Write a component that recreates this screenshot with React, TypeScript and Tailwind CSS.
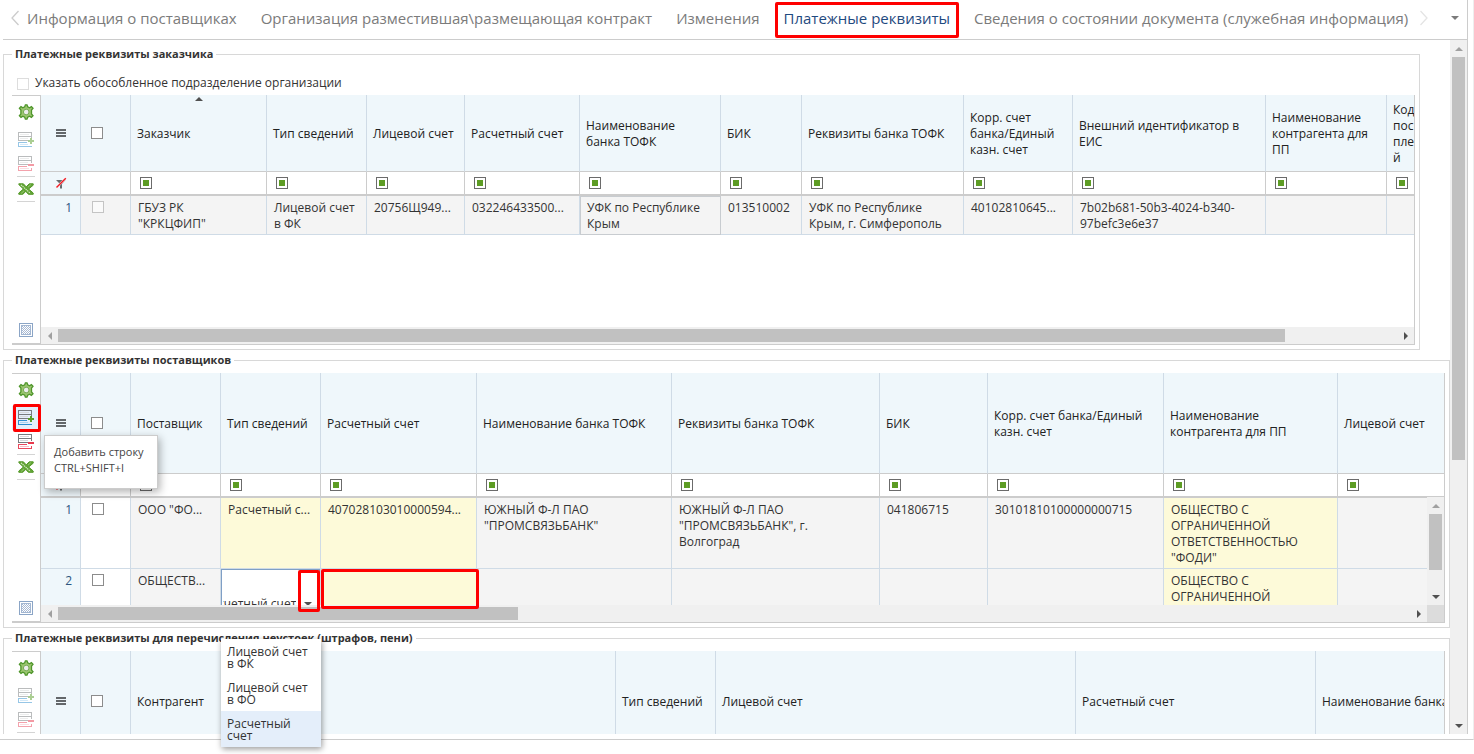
import clsx from 'clsx';

type Cell = { text?: string; yellow?: boolean; focused?: boolean; editor?: boolean };
type Column = { title: string; width: number; sorted?: boolean };

const tabs = [
  'Информация о поставщиках',
  'Организация разместившая\\размещающая контракт',
  'Изменения',
  'Платежные реквизиты',
  'Сведения о состоянии документа (служебная информация)',
];

const activeTab = 3;

const customerColumns: Column[] = [
  { title: 'Заказчик', width: 136, sorted: true },
  { title: 'Тип сведений', width: 100 },
  { title: 'Лицевой счет', width: 98 },
  { title: 'Расчетный счет', width: 115 },
  { title: 'Наименование\nбанка ТОФК', width: 141 },
  { title: 'БИК', width: 81 },
  { title: 'Реквизиты банка ТОФК', width: 162 },
  { title: 'Корр. счет\nбанка/Единый\nказн. счет', width: 109 },
  { title: 'Внешний идентификатор в\nЕИС', width: 193 },
  { title: 'Наименование\nконтрагента для\nПП', width: 121 },
  { title: 'Код\nпос\nпле\nй', width: 60 },
];

const customerRows: Cell[][] = [
  [
    { text: 'ГБУЗ РК\n"КРКЦФИП"' },
    { text: 'Лицевой счет\nв ФК' },
    { text: '20756Щ949...' },
    { text: '032246433500...' },
    { text: 'УФК по Республике\nКрым', focused: true },
    { text: '013510002' },
    { text: 'УФК по Республике\nКрым, г. Симферополь' },
    { text: '40102810645...' },
    { text: '7b02b681-50b3-4024-b340-\n97befc3e6e37' },
    {},
    {},
  ],
];

const supplierColumns: Column[] = [
  { title: 'Поставщик', width: 90 },
  { title: 'Тип сведений', width: 100 },
  { title: 'Расчетный счет', width: 156 },
  { title: 'Наименование банка ТОФК', width: 195 },
  { title: 'Реквизиты банка ТОФК', width: 208 },
  { title: 'БИК', width: 108 },
  { title: 'Корр. счет банка/Единый\nказн. счет', width: 176 },
  { title: 'Наименование\nконтрагента для ПП', width: 174 },
  { title: 'Лицевой счет', width: 180 },
];

const supplierRows: Cell[][] = [
  [
    { text: 'ООО "ФО...' },
    { text: 'Расчетный с...', yellow: true },
    { text: '407028103010000594...', yellow: true },
    { text: 'ЮЖНЫЙ Ф-Л ПАО\n"ПРОМСВЯЗЬБАНК"' },
    { text: 'ЮЖНЫЙ Ф-Л ПАО\n"ПРОМСВЯЗЬБАНК", г.\nВолгоград' },
    { text: '041806715' },
    { text: '30101810100000000715' },
    { text: 'ОБЩЕСТВО С\nОГРАНИЧЕННОЙ\nОТВЕТСТВЕННОСТЬЮ\n"ФОДИ"', yellow: true },
    {},
  ],
  [
    { text: 'ОБЩЕСТВ...' },
    { editor: true },
    { yellow: true },
    {},
    {},
    {},
    {},
    { text: 'ОБЩЕСТВО С\nОГРАНИЧЕННОЙ', yellow: true },
    {},
  ],
];

const penaltyColumns: Column[] = [
  { title: 'Контрагент', width: 485 },
  { title: 'Тип сведений', width: 100 },
  { title: 'Лицевой счет', width: 360 },
  { title: 'Расчетный счет', width: 240 },
  { title: 'Наименование банка', width: 200 },
];

const accountTypes = ['Лицевой счет\nв ФК', 'Лицевой счет\nв ФО', 'Расчетный\nсчет'];

function GearIcon() {
  return (
    <svg width="16" height="16" viewBox="0 0 16 16">
      <path
        d="M6.7 2.8 L7.4 .8 H9 L9.7 2.8 L11.6 3.8 L13.4 2.6 L15 4.2 L13.5 6 V10 L15 11.8 L13.4 13.4 L11.6 12.2 L9.7 13.2 L9 15.2 H7.4 L6.7 13.2 L4.8 12.2 L3 13.4 L1.4 11.8 L2.9 10 V6 L1.4 4.2 L3 2.6 L4.8 3.8 Z"
        fill="#9cc670"
        stroke="#4f962b"
        strokeWidth="1.3"
      />
      <circle cx="8.2" cy="8" r="2.8" fill="#ededed" stroke="#78ab58" />
    </svg>
  );
}

function AddRowIcon() {
  return (
    <svg width="16" height="16" viewBox="0 0 16 16" fill="none" shapeRendering="crispEdges">
      <path d="M.5 .5h13v8H.5zM.5 4.5h13" stroke="#777b7e" />
      <path d="M2 2.5h9M2 6.5h8" stroke="#d8dadb" />
      <path d="M9 10.5H.5v4h13v-1" stroke="#2f8fce" />
      <path d="M2 12.5h8" stroke="#a9d4f2" />
      <path d="M12 6h2v2h2v2h-2v2h-2v-2h-2V8h2z" fill="#5a9e2a" />
    </svg>
  );
}

function RemoveRowIcon() {
  return (
    <svg width="16" height="16" viewBox="0 0 16 16" fill="none" shapeRendering="crispEdges">
      <path d="M.5 8.5v-8h13v6M.5 4.5h13M.5 8.5h9" stroke="#777b7e" />
      <path d="M2 2.5h9M2 6.5h8" stroke="#d8dadb" />
      <path d="M9 10.5H.5v4h13v-3" stroke="#e8485c" />
      <path d="M2 12.5h9" stroke="#f9bcc4" />
      <path d="M10 8h6v2h-6z" fill="#e8384c" />
    </svg>
  );
}

function ExcelIcon() {
  return (
    <svg width="16" height="12" viewBox="0 0 16 12">
      <path
        d="M.8 .8h4.6l2.8 3 3-3h4v1.4L10.6 6l4.6 4v1.3h-4.8L7.8 8.4l-3 2.9h-4V10l4.6-4L.8 1.6z"
        fill="#63a536"
        stroke="#56992b"
        strokeWidth="1"
      />
      <path d="M3 1.8l9.4 8.6" stroke="#d9ecc9" strokeWidth="1.1" strokeDasharray="1.4 .7" />
      <path d="M10 4.2l2.8-2.6M3.2 10.4l2.8-2.6" stroke="#a9d088" strokeWidth=".8" />
    </svg>
  );
}

function SelectionIcon() {
  return (
    <svg width="14" height="14" viewBox="0 0 14 14" shapeRendering="crispEdges">
      <defs>
        <pattern id="dots" width="2" height="2" patternUnits="userSpaceOnUse">
          <path d="M0 0h1v1H0zM1 1h1v1H1z" fill="#a9bad3" />
        </pattern>
      </defs>
      <rect x=".5" y=".5" width="13" height="13" fill="#fff" stroke="#8ba5c6" />
      <rect x="2.5" y="2.5" width="9" height="9" fill="url(#dots)" stroke="#a3b7d2" />
    </svg>
  );
}

function ClearFilterIcon() {
  return (
    <svg width="12" height="12" viewBox="0 0 12 12">
      <path d="M1 3h9.5L7 7v4.5H5V7z" fill="#686c6f" />
      <path d="M1.5 10.5L10.8 1.2" stroke="#fff" strokeWidth="2.2" />
      <path d="M1.5 10.5L10.8 1.2" stroke="#ee1c25" strokeWidth="1.5" />
    </svg>
  );
}

function MenuIcon() {
  return (
    <svg width="10" height="8" viewBox="0 0 10 8" shapeRendering="crispEdges">
      <path d="M0 0h10v2H0zM0 3h10v2H0zM0 6h10v2H0z" fill="#63676a" />
    </svg>
  );
}

function Arrow({ dir, muted = false }: { dir: 'up' | 'down' | 'left' | 'right'; muted?: boolean }) {
  const paths = { up: 'M0 6l4-4 4 4z', down: 'M0 2l4 4 4-4z', left: 'M6 0L2 4l4 4z', right: 'M2 0l4 4-4 4z' };
  return (
    <svg width="8" height="8" viewBox="0 0 8 8">
      <path d={paths[dir]} fill={muted ? '#a0a0a0' : '#505050'} />
    </svg>
  );
}

function Checkbox({ label, faded = false }: { label: string; faded?: boolean }) {
  return (
    <input
      type="checkbox"
      aria-label={label}
      className={clsx(
        'block size-3 appearance-none border',
        faded ? 'border-[#c4c4c4] bg-[#fafafa]' : 'border-[#8c8c8c] bg-white',
      )}
    />
  );
}

function Toolbar({ enabled = false }: { enabled?: boolean }) {
  const dim = enabled ? '' : 'opacity-50';
  return (
    <div className="flex w-7 shrink-0 flex-col items-center border-t border-b-2 border-t-[#ccc] border-b-[#ccc]">
      <button type="button" aria-label="Настройки" className="flex h-8 w-7 items-center justify-center">
        <GearIcon />
      </button>
      <button
        type="button"
        aria-label="Добавить строку"
        className={clsx('flex h-6 w-7 items-center justify-center', enabled && 'bg-[#e3eefa]')}
      >
        <span className={dim}><AddRowIcon /></span>
      </button>
      <button type="button" aria-label="Удалить строку" className="flex h-6 w-7 items-center justify-center">
        <span className={dim}><RemoveRowIcon /></span>
      </button>
      <div className="h-px w-[18px] bg-[#d4d4d4]" />
      <button type="button" aria-label="Выгрузить в Excel" className="flex h-6 w-7 items-center justify-center">
        <ExcelIcon />
      </button>
      <div className="h-px w-[18px] bg-[#d4d4d4]" />
      <button type="button" aria-label="Выделение" className="mt-auto flex h-[26px] w-7 items-center justify-center">
        <SelectionIcon />
      </button>
    </div>
  );
}

function HorizontalScroll({ thumb, corner = false }: { thumb: string; corner?: boolean }) {
  return (
    <div className="flex h-[17px] bg-[#f0f0f0]">
      <div className="flex w-[17px] items-center justify-center"><Arrow dir="left" muted /></div>
      <div className="flex-1 py-[2px]">
        <div className={clsx('h-full bg-[#c1c1c1]', thumb)} />
      </div>
      <div className="flex w-[17px] items-center justify-center"><Arrow dir="right" /></div>
      {corner && <div className="w-[17px] bg-[#dcdcdc]" />}
    </div>
  );
}

function VerticalScroll({ thumb }: { thumb: string }) {
  return (
    <div className="flex h-full w-[17px] flex-col bg-[#f0f0f0]">
      <div className="flex h-[17px] items-center justify-center"><Arrow dir="up" muted /></div>
      <div className="flex-1 px-[2px]">
        <div className={clsx('w-full bg-[#c1c1c1]', thumb)} />
      </div>
      <div className="flex h-[17px] items-center justify-center"><Arrow dir="down" /></div>
    </div>
  );
}

function TypeEditor() {
  return (
    <div className="flex h-[70px] items-center border border-[#7f9fc6] bg-white pl-px">
      <div className="flex w-[73px] justify-end overflow-hidden">
        <select
          aria-label="Тип сведений"
          className="w-[92px] shrink-0 appearance-none bg-white text-xs leading-4 outline-none"
        >
          <option>Расчетный счет</option>
        </select>
      </div>
      <div className="flex flex-1 justify-center"><Arrow dir="down" /></div>
    </div>
  );
}

function GridTable({
  columns,
  rows,
  headClass,
  rowClass,
  locked = false,
}: {
  columns: Column[];
  rows: Cell[][];
  headClass: string;
  rowClass: string;
  locked?: boolean;
}) {
  const total = columns.reduce((sum, c) => sum + c.width, 90);
  const th = 'border-r border-b border-r-[#cfdbe6] border-b-[#ccc] bg-[#eff7fb] p-0';
  const filter = 'border-r border-b-2 border-[#ccc] p-0';
  const td = 'border-r border-b border-[#cfdbe6] p-0 align-top';

  return (
    <table className="table-fixed border-separate border-spacing-0 text-xs leading-4" style={{ width: total }}>
      <colgroup>
        <col className="w-[40px]" />
        <col className="w-[50px]" />
        {columns.map((c) => (
          <col key={c.title} style={{ width: c.width }} />
        ))}
      </colgroup>
      <thead>
        <tr className={headClass}>
          <th className={th}>
            <span className="flex justify-center"><MenuIcon /></span>
          </th>
          <th className={clsx(th, 'pl-[10px]')}>
            <Checkbox label="Выбрать все" />
          </th>
          {columns.map((c) => (
            <th
              key={c.title}
              className={clsx(th, 'relative pt-[2px] pl-[6px] text-left font-normal whitespace-pre text-[#222]')}
            >
              {c.sorted && (
                <span className="absolute inset-x-0 top-0 flex justify-center"><Arrow dir="up" /></span>
              )}
              {c.title}
            </th>
          ))}
        </tr>
        <tr className="h-6">
          <td className={clsx(filter, 'bg-[#eff7fb]')}>
            <span className="flex justify-center"><ClearFilterIcon /></span>
          </td>
          <td className={filter} />
          {columns.map((c) => (
            <td key={c.title} className={clsx(filter, 'pl-[9px]')}>
              <button
                type="button"
                aria-label="Условие фильтра"
                className="flex size-3 items-center justify-center border border-[#6b6b6b] bg-white"
              >
                <span className="size-[6px] bg-[#5d9c24]" />
              </button>
            </td>
          ))}
        </tr>
      </thead>
      <tbody>
        {rows.map((row, i) => (
          <tr key={i} className={rowClass}>
            <td className={clsx(td, 'bg-[#eff7fb] pt-1 pr-2 text-right text-[#2d5580]')}>{i + 1}</td>
            <td className={clsx(td, 'pt-[5px] pl-[11px]', locked && 'bg-[#f4f4f4]')}>
              <Checkbox label="Выбрать строку" faded={locked} />
            </td>
            {row.map((cell, j) =>
              cell.editor ? (
                <td key={j} className={td}><TypeEditor /></td>
              ) : (
                <td
                  key={j}
                  className={clsx(
                    td,
                    'pt-1 pl-[7px] whitespace-pre text-[#333]',
                    cell.yellow ? 'bg-[#fdfad9]' : 'bg-[#f4f4f4]',
                    cell.focused && 'outline outline-offset-[-1px] outline-[#c8ccd0]',
                  )}
                >
                  {cell.text}
                </td>
              ),
            )}
          </tr>
        ))}
      </tbody>
    </table>
  );
}

function Section({
  title,
  className,
  children,
}: {
  title: string;
  className?: string;
  children: React.ReactNode;
}) {
  return (
    <fieldset className={clsx('min-w-0 border border-[#d8d8d8] pr-1 pb-1 pl-2', className)}>
      <legend className="px-[3px] text-[11px] leading-4 font-bold text-[#333]">{title}</legend>
      {children}
    </fieldset>
  );
}

export default function App() {
  return (
    <div className="relative flex h-screen flex-col overflow-hidden bg-white pb-[14px] font-['Open_Sans','Noto_Sans',sans-serif] text-xs text-[#333]">
      <div className="flex min-h-0 flex-1 border-r border-b border-r-[#eee] border-b-[#ccc] pr-[5px] pb-[5px] pl-[3px]">
        <div className="flex min-w-0 flex-1 flex-col border-r border-[#ccc]">
          <nav className="flex h-10 shrink-0 items-center border-b border-[#ccc] pb-1 pl-2">
            <button type="button" aria-label="Назад" className="w-4">
              <svg width="8" height="16" viewBox="0 0 8 16" fill="none">
                <path d="M7.5 1L1 8l6.5 7" stroke="#ccc" strokeWidth="1.3" />
              </svg>
            </button>
            <div className="flex gap-6 text-[15px] leading-5 whitespace-nowrap text-[#7b7b7b]">
              {tabs.map((tab, i) => (
                <a key={tab} href="#" className={clsx('relative', i === activeTab && 'text-[#1f4a80]')}>
                  {tab}
                  {i === activeTab && (
                    <span className="absolute -inset-x-[9px] -top-[6px] -bottom-[10px] rounded-xs border-3 border-[#fe0000]" />
                  )}
                </a>
              ))}
            </div>
            <button type="button" aria-label="Вперед" className="ml-3">
              <svg width="8" height="16" viewBox="0 0 8 16" fill="none">
                <path d="M.5 1L7 8 .5 15" stroke="#e4e4e4" strokeWidth="1.3" />
              </svg>
            </button>
            <button type="button" aria-label="Все вкладки" className="mr-2 ml-auto opacity-75">
              <Arrow dir="down" />
            </button>
          </nav>

          <div className="flex min-h-0 flex-1">
            <main className="flex min-w-0 flex-1 flex-col gap-[2px] overflow-hidden pt-[6px]">
              <Section title="Платежные реквизиты заказчика" className="mr-[30px] shrink-0">
                <label className="mt-[13px] mb-1 ml-[5px] flex h-4 items-center gap-[6px] text-xs leading-4">
                  <input type="checkbox" className="mt-[2px] size-3 appearance-none border border-[#ddd]" />
                  Указать обособленное подразделение организации
                </label>
                <div className="flex">
                  <Toolbar />
                  <div className="min-w-0 flex-1 border-x border-b border-[#ccc]">
                    <div className="h-[232px] overflow-hidden">
                      <GridTable
                        columns={customerColumns}
                        rows={customerRows}
                        headClass="h-[77px]"
                        rowClass="h-[39px]"
                        locked
                      />
                    </div>
                    <HorizontalScroll thumb="w-11/12" />
                  </div>
                </div>
              </Section>

              <Section title="Платежные реквизиты поставщиков" className="shrink-0">
                <div className="relative mt-[5px] flex">
                  <Toolbar enabled />
                  <div className="min-w-0 flex-1 border-x border-b border-[#ccc]">
                    <div className="relative h-[232px] overflow-hidden">
                      <GridTable
                        columns={supplierColumns}
                        rows={supplierRows}
                        headClass="h-[101px]"
                        rowClass="h-[71px]"
                      />
                      <div className="absolute right-0 bottom-0 h-[108px]">
                        <VerticalScroll thumb="h-3/4" />
                      </div>
                    </div>
                    <HorizontalScroll thumb="w-[34%]" corner />
                  </div>

                  {/* highlighted controls */}
                  <span className="absolute top-[31px] left-px size-7 rounded-xs border-3 border-[#fe0000]" />
                  <span className="absolute top-[197px] left-[286px] h-[42px] w-[22px] rounded-xs border-3 border-[#fe0000]" />
                  <span className="absolute top-[196px] left-[309px] h-10 w-[158px] rounded-xs border-3 border-[#fe0000]" />

                  <div
                    role="tooltip"
                    className="absolute top-[62px] left-8 z-10 h-[54px] w-[114px] border border-[#ccc] bg-white px-[9px] pt-2 text-[11px] leading-4 whitespace-nowrap text-[#444] shadow-[2px_3px_8px_rgba(0,0,0,0.3)]"
                  >
                    Добавить строку
                    <br />
                    CTRL+SHIFT+I
                  </div>
                </div>
              </Section>

              <Section title="Платежные реквизиты для перечисления неустоек (штрафов, пени)" className="shrink-0">
                <div className="mt-[5px] flex h-[250px]">
                  <Toolbar />
                  <div className="min-w-0 flex-1 overflow-hidden border-x border-[#ccc]">
                    <GridTable columns={penaltyColumns} rows={[]} headClass="h-[101px]" rowClass="h-[39px]" />
                  </div>
                </div>
              </Section>
            </main>
            <VerticalScroll thumb="h-[61%]" />
          </div>
        </div>
      </div>

      <ul
        role="listbox"
        aria-label="Тип сведений"
        className="absolute top-[639px] left-[221px] w-[100px] bg-white leading-3 shadow-[1px_2px_6px_rgba(0,0,0,0.4)]"
      >
        {accountTypes.map((type, i) => (
          <li
            key={type}
            role="option"
            aria-selected={i === 2}
            className={clsx('h-9 px-[6px] pt-[7px] whitespace-pre', i === 2 && 'bg-[#e4eefa]')}
          >
            {type}
          </li>
        ))}
      </ul>
    </div>
  );
}
